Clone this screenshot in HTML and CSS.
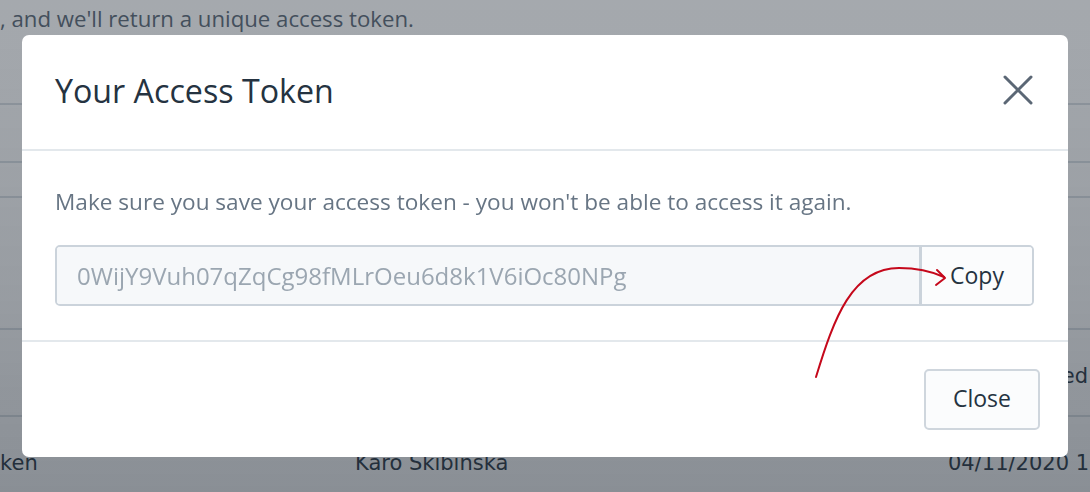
FILE: index.html
```html
<!DOCTYPE html>
<html lang="en">
<head>
<meta charset="utf-8">
<title>Your Access Token</title>
<link rel="stylesheet" href="styles.css">
</head>
<body>
<div class="page">
  <p class="intro">, and we'll return a unique access token.</p>
  <div class="row r1"></div>
  <div class="row r2"></div>
  <div class="row r3"></div>
  <div class="row r4"><span class="status">Revoked</span></div>
  <div class="row r5">
    <span class="c-name">Token</span>
    <span class="c-user">Karo Skibinska</span>
    <span class="c-date">04/11/2020 1</span>
  </div>
</div>

<div class="overlay">
  <div class="modal">
    <div class="modal-header">
      <h2 class="modal-title">Your Access Token</h2>
      <button class="icon-close" aria-label="Close">
        <svg width="30" height="30" viewBox="0 0 30 30"><path d="M2 2 L28 28 M28 2 L2 28" stroke="#5b6775" stroke-width="3" stroke-linecap="round" fill="none"/></svg>
      </button>
    </div>
    <div class="modal-body">
      <p class="note">Make sure you save your access token - you won't be able to access it again.</p>
      <div class="input-group">
        <input class="token" type="text" readonly value="0WijY9Vuh07qZqCg98fMLrOeu6d8k1V6iOc80NPg">
        <button class="btn-copy">Copy</button>
      </div>
    </div>
    <div class="modal-footer">
      <button class="btn">Close</button>
    </div>
  </div>
</div>

<svg class="annot" width="1090" height="492" viewBox="0 0 1090 492">
  <path d="M816 377 C 834 318, 852 268, 899 268 C 919 268, 933 272, 944 277" stroke="#c5081b" stroke-width="2" fill="none" stroke-linecap="round"/>
  <path d="M937 270 L945 278 L936 285" stroke="#c5081b" stroke-width="2" fill="none" stroke-linecap="round" stroke-linejoin="round"/>
</svg>
</body>
</html>
```

FILE: styles.css
```css
* { box-sizing: border-box; }
html, body { margin: 0; padding: 0; }
body {
  width: 1090px;
  height: 492px;
  overflow: hidden;
  background: #ffffff;
  font-family: "Open Sans", Lato, sans-serif;
  color: #2a3744;
  position: relative;
}

.page { width: 1090px; }
.intro {
  margin: 0;
  height: 105px;
  padding-top: 3px;
  font-size: 22.2px;
  color: #5d6a78;
  border-bottom: 2px solid #d9dfe4;
}
.row {
  border-bottom: 2px solid #d9dfe4;
  display: flex;
  align-items: center;
  font-family: "DejaVu Sans", sans-serif;
  font-size: 21px;
  color: #2a3744;
}
.r1 { height: 58px; }
.r2 { height: 35px; }
.r3 { height: 132px; }
.r4 { height: 87px; justify-content: flex-end; padding-top: 6px; }
.r5 { height: 92px; border-bottom: none; }
.status { margin-right: 2px; }
.c-name { margin-left: -22px; width: 377px; }
.c-user { width: 593px; }
.c-date { white-space: nowrap; }

.overlay {
  position: fixed;
  inset: 0;
  background: linear-gradient(180deg, rgba(30, 40, 52, 0.40) 0%, rgba(30, 40, 52, 0.46) 60%, rgba(30, 40, 52, 0.52) 100%);
  padding: 35px 22px 35px 22px;
}

.modal {
  background: #ffffff;
  border-radius: 7px;
  height: 422px;
  display: flex;
  flex-direction: column;
}

.modal-header {
  height: 116px;
  border-bottom: 2px solid #e3e8ec;
  display: flex;
  align-items: center;
  justify-content: space-between;
  padding: 0 35px 4px 33px;
}
.modal-title {
  margin: 0;
  font-weight: 400;
  font-size: 32.2px;
  color: #253341;
}
.icon-close {
  border: 0;
  background: none;
  padding: 0;
  width: 30px;
  height: 30px;
  display: flex;
}

.modal-body {
  padding: 37px 34px 34px 33px;
  border-bottom: 2px solid #e3e8ec;
}
.note {
  margin: 0 0 29px;
  font-size: 22.6px;
  line-height: 28px;
  color: #677584;
}
.input-group {
  display: flex;
  height: 61px;
  border: 2px solid #cbd3db;
  border-radius: 5px;
  overflow: hidden;
}
.token {
  flex: 1;
  border: 0;
  margin: 0;
  background: #f6f8fa;
  font-family: inherit;
  font-size: 24px;
  color: #9ba6b1;
  padding: 0 20px;
  outline: none;
}
.btn-copy {
  width: 113px;
  border: 0;
  border-left: 3px solid #cbd3db;
  background: #fbfcfd;
  font-family: inherit;
  font-size: 23px;
  color: #253341;
  padding: 0 0 2px 0;
}

.modal-footer {
  flex: 1;
  display: flex;
  justify-content: flex-end;
  align-items: flex-start;
  padding: 27px 28px 0 0;
}
.btn {
  width: 116px;
  height: 61px;
  border: 2px solid #cfd6dd;
  border-radius: 5px;
  background: #fbfcfd;
  font-family: inherit;
  font-size: 23px;
  color: #253341;
  padding: 0 0 4px 0;
}

.annot {
  position: absolute;
  left: 0;
  top: 0;
  pointer-events: none;
}
```
